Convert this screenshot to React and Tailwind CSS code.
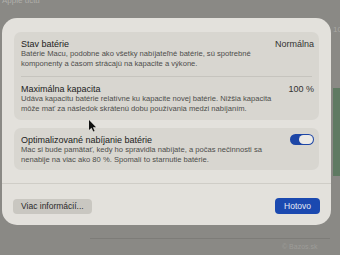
export default function App() {
  const font = { fontFamily: '"Liberation Sans", Arial, sans-serif' };
  return (
    <div className="relative w-[340px] h-[255px] overflow-hidden bg-[#8a8985]" style={font}>
      {/* faint top text */}
      <div className="absolute left-[2px] top-[-5px] text-[8px] text-[#b0afab]">Apple účtu</div>
      <div className="absolute left-[333px] top-[24px] text-[8px] text-[#a9a8a4]">10</div>
      <div className="absolute left-[334px] top-[136px] text-[8px] text-[#a9a8a4]">12</div>
      <div className="absolute left-[333px] top-[88px] w-[8px] h-[88px] bg-[#5f7a62]" />
      <div className="absolute left-[90px] top-[238px] w-[240px] h-px bg-[#7d7c78]" />
      <div className="absolute left-[282px] top-[242px] text-[7px] text-[#9d9c98]">© Bazos.sk</div>

      <div className="pt-[18px] pl-[2px]">
        <div className="w-[329px] h-[207px] rounded-[15px] bg-[#e3e1dc] flex flex-col">
          <div className="px-[12px] pt-[14px] flex flex-col gap-[8px]">
            {/* Card 1 */}
            <div className="rounded-[7px] bg-[#d8d6d0] flex flex-col">
              <div className="pl-[7px] pr-[5px] pt-[7px] pb-[7px] h-[44px]">
                <div className="flex justify-between text-[9px] leading-[10px] text-[#222]">
                  <span className="font-medium">Stav batérie</span>
                  <span className="text-[#333]">Normálna</span>
                </div>
                <div className="text-[7.6px] leading-[10px] text-[#4d4d4b]">
                  Batérie Macu, podobne ako všetky nabíjateľné batérie, sú spotrebné<br />
                  komponenty a časom strácajú na kapacite a výkone.
                </div>
              </div>
              <div className="mx-[7px] h-px bg-[#c6c4be]" />
              <div className="pl-[7px] pr-[5px] pt-[7px] h-[43px]">
                <div className="flex justify-between text-[9px] leading-[10px] text-[#222]">
                  <span className="font-medium">Maximálna kapacita</span>
                  <span className="text-[#333]">100 %</span>
                </div>
                <div className="text-[7.6px] leading-[10px] text-[#4d4d4b]">
                  Udáva kapacitu batérie relatívne ku kapacite novej batérie. Nižšia kapacita<br />
                  môže mať za následok skrátenú dobu používania medzi nabíjaním.
                </div>
              </div>
            </div>
            {/* Card 2 */}
            <div className="rounded-[7px] bg-[#d8d6d0] pl-[7px] pr-[5px] pt-[7px] h-[42px] flex justify-between">
              <div>
                <div className="text-[9px] leading-[10px] text-[#222] font-medium">Optimalizované nabíjanie batérie</div>
                <div className="text-[7.6px] leading-[10px] text-[#4d4d4b]">
                  Mac si bude pamätať, kedy ho spravidla nabíjate, a počas nečinnosti sa<br />
                  nenabije na viac ako 80 %. Spomalí to starnutie batérie.
                </div>
              </div>
              <div className="w-[24px] h-[11px] rounded-full bg-[#1d46a6] flex justify-end items-center pr-[1px] mt-[-1px]">
                <div className="w-[14px] h-[9px] rounded-full bg-[#eceae6]" />
              </div>
            </div>
          </div>
          <div className="mt-[13px] h-px bg-[#cfcdc7]" />
          <div className="flex justify-between items-center pl-[11px] pr-[11px] pt-[14px]">
            <div className="h-[15px] px-[8px] rounded-[4px] bg-[#c9c7c1] text-[8.5px] leading-[15px] text-[#2a2a2a] font-medium">Viac informácií...</div>
            <div className="h-[16px] w-[45px] rounded-[4px] bg-[#1b49b0] text-[8.5px] leading-[16px] text-[#e8ecf5] font-medium text-center">Hotovo</div>
          </div>
        </div>
      </div>

      {/* cursor */}
      <svg className="absolute left-[88px] top-[120px]" width="8" height="12" viewBox="0 0 8 12">
        <path d="M1 0 L1 10 L3.5 7.8 L5.3 11.5 L6.6 10.9 L4.9 7.3 L8 7.3 Z" fill="#111" />
      </svg>
    </div>
  );
}
